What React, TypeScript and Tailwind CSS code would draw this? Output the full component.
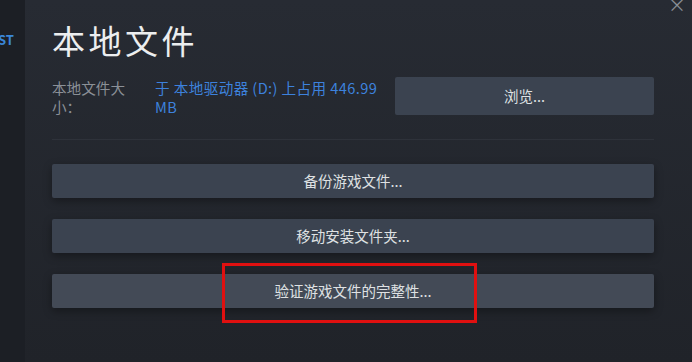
const font = { fontFamily: '"Noto Sans CJK SC", "Noto Sans", sans-serif' };

function ActionButton({ label, highlight }: { label: string; highlight?: boolean }) {
  return (
    <button
      className={
        "h-[34px] w-full rounded-[2px] text-[14.5px] text-[#dfe1e3] shadow-[0_3px_8px_rgba(0,0,0,0.35)] " +
        (highlight ? "bg-[#434a56]" : "bg-[#3b4350]")
      }
    >
      {label}
    </button>
  );
}

export default function App() {
  return (
    <div
      className="relative flex h-[362px] w-[692px] overflow-hidden bg-[#23262d]"
      style={font}
    >
      {/* left nav strip */}
      <div className="w-[25px] shrink-0 bg-[#1c1f25] pt-[30px]">
        <div className="-ml-[2px] text-[13px] font-semibold text-[#3a86d8]">ST</div>
      </div>

      {/* main panel */}
      <div className="flex-1 bg-gradient-to-b from-[#272b33] to-[#202329] pl-[27px] pr-[38px] pt-[20px]">
        <h1 className="text-[33px] leading-[40px] tracking-[3.5px] text-[#eceeef]">本地文件</h1>

        <div className="mt-[17px] flex items-start">
          <div className="w-[103px] shrink-0 pr-[24px] pt-[1px] text-[14.6px] leading-[19px] text-[#8b9097]">
            本地文件大小：
          </div>
          <div className="w-[240px] shrink-0 pr-[3px] pt-[1px] text-[14.6px] leading-[19px] tracking-[0.4px] text-[#3d82dd]">
            于 本地驱动器 (D:) 上占用 446.99 MB
          </div>
          <button className="h-[38px] flex-1 rounded-[2px] bg-[#3b4350] text-[14.5px] text-[#dfe1e3]">
            浏览...
          </button>
        </div>

        <div className="mt-[23px] h-px bg-[#2e323a]" />

        <div className="mt-[24px] flex flex-col gap-[21px]">
          <ActionButton label="备份游戏文件..." />
          <ActionButton label="移动安装文件夹..." />
          <ActionButton label="验证游戏文件的完整性..." highlight />
        </div>
      </div>

      {/* close glyph, cut off by the top edge */}
      <div className="absolute right-[6px] top-[-9px] text-[18px] text-[#8a8f96]">×</div>

      {/* red annotation box */}
      <div className="absolute left-[222px] top-[263px] h-[60px] w-[255px] border-[3px] border-[#e01010]" />
    </div>
  );
}
